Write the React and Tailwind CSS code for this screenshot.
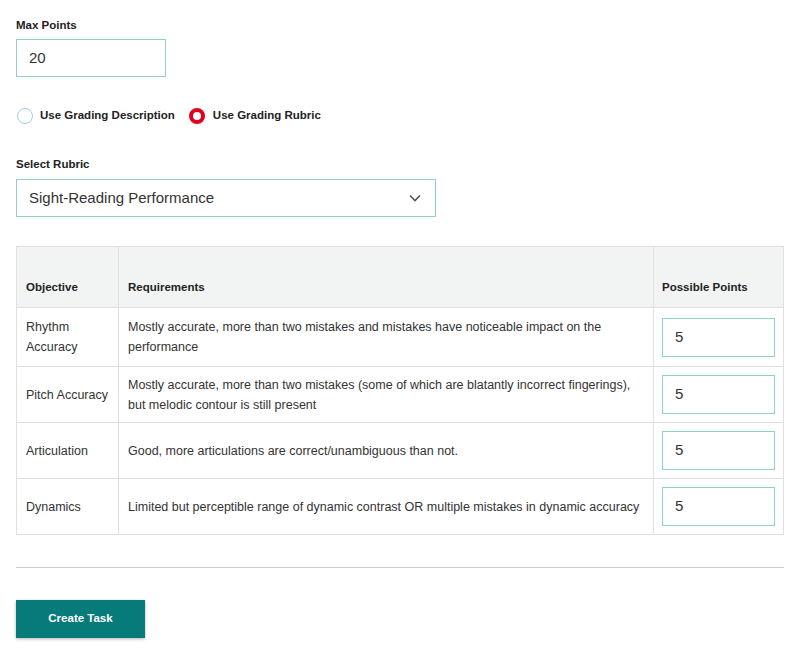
import React from "react";

const rows = [
  { o: "Rhythm Accuracy", r: "Mostly accurate, more than two mistakes and mistakes have noticeable impact on the performance", h: "h-[59px]" },
  { o: "Pitch Accuracy", r: "Mostly accurate, more than two mistakes (some of which are blatantly incorrect fingerings), but melodic contour is still present", h: "h-[56px]" },
  { o: "Articulation", r: "Good, more articulations are correct/unambiguous than not.", h: "h-[56px]" },
  { o: "Dynamics", r: "Limited but perceptible range of dynamic contrast OR multiple mistakes in dynamic accuracy", h: "h-[56px]" },
];

export default function App() {
  return (
    <div className="w-[805px] h-[657px] bg-white px-4 pt-[17px] text-[#333] font-['Liberation_Sans',sans-serif]">
      <div className="text-[11.5px] font-bold text-[#222] leading-[16px]">Max Points</div>
      <div className="mt-[6px] w-[150px] h-[38px] border border-[#8fd0c8] flex items-center pl-[12px] text-[15px] text-[#333]">20</div>

      <div className="mt-[29px] flex items-center h-[20px]">
        <span className="w-[16px] h-[16px] rounded-full border-[1.5px] border-[#9fd6d0] ml-[1px]" />
        <span className="ml-[7px] text-[11.5px] font-bold text-[#222]">Use Grading Description</span>
        <span className="ml-[14px] w-[16px] h-[16px] rounded-full border-[4.5px] border-[#e0001b] bg-white" />
        <span className="ml-[8px] text-[11.5px] font-bold text-[#222]">Use Grading Rubric</span>
      </div>

      <div className="mt-[30px] text-[11.5px] font-bold text-[#222] leading-[16px]">Select Rubric</div>
      <div className="mt-[7px] w-[420px] h-[38px] border border-[#8fd0c8] flex items-center justify-between pl-[12px] pr-[14px] text-[15px] text-[#333]">
        <span>Sight-Reading Performance</span>
        <svg width="12" height="8" viewBox="0 0 12 8" fill="none" stroke="#555" strokeWidth="1.6">
          <path d="M1 1.5l5 5 5-5" />
        </svg>
      </div>

      <table className="mt-[29px] w-[768px] border-collapse text-[12.5px]">
        <thead>
          <tr className="bg-[#f1f4f3] h-[61px]">
            <th className="w-[102px] border border-[#e0e0e0] align-bottom text-left font-bold text-[11.5px] text-[#222] pl-[9px] pb-[11px]">Objective</th>
            <th className="w-[535px] border border-[#e0e0e0] align-bottom text-left font-bold text-[11.5px] text-[#222] pl-[9px] pb-[11px]">Requirements</th>
            <th className="border border-[#e0e0e0] align-bottom text-left font-bold text-[11.5px] text-[#222] pl-[8px] pb-[11px]">Possible Points</th>
          </tr>
        </thead>
        <tbody>
          {rows.map((row) => (
            <tr key={row.o} className={row.h}>
              <td className="border border-[#e0e0e0] pl-[9px] pr-[8px] leading-[20px] align-middle">{row.o}</td>
              <td className="border border-[#e0e0e0] pl-[9px] pr-[8px] leading-[20px] align-middle">{row.r}</td>
              <td className="border border-[#e0e0e0] pl-[8px] pr-[8px] align-middle">
                <div className="w-[113px] h-[39px] border border-[#8fd0c8] flex items-center pl-[12px] text-[15px] text-[#333]">5</div>
              </td>
            </tr>
          ))}
        </tbody>
      </table>

      <div className="mt-[32px] w-[768px] h-px bg-[#cccccc]" />

      <button className="mt-[32px] w-[129px] h-[38px] bg-[#077a7a] text-white text-[11.5px] font-bold shadow-[0_1px_3px_rgba(0,0,0,0.3)]">Create Task</button>
    </div>
  );
}
